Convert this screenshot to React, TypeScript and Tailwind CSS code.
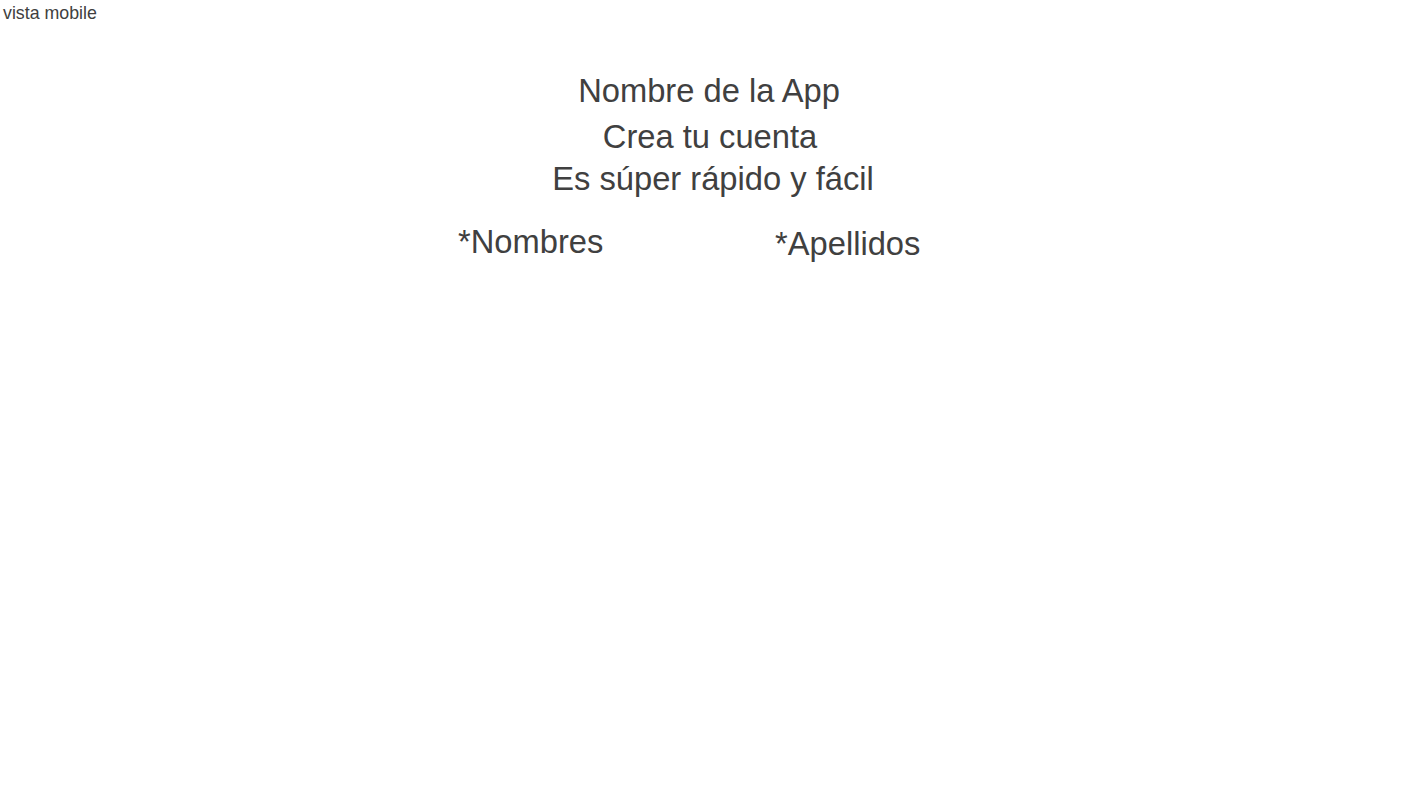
import React from 'react';

const App = () => {
  return (
    <div className="min-h-screen bg-white text-[#404040] font-['Liberation_Sans',Arial,sans-serif]">
      <p className="pl-[3px] text-[17.8px] leading-[26px]">vista mobile</p>

      <div className="mt-[46px] flex flex-col items-center text-[32.7px] leading-[38px]">
        <h1 className="mr-[4px] font-normal">Nombre de la App</h1>
        <h2 className="mt-[8px] mr-[2px] font-normal">Crea tu cuenta</h2>
        <p className="mt-[4px] ml-[4px]">Es súper rápido y fácil</p>
      </div>

      <form className="mx-auto mt-[25px] grid w-[506px] grid-cols-2 text-[32.7px] leading-[38px]">
        <label>*Nombres</label>
        <label className="mt-[2px] pl-[64px]">*Apellidos</label>
      </form>
    </div>
  );
};

export default App;
